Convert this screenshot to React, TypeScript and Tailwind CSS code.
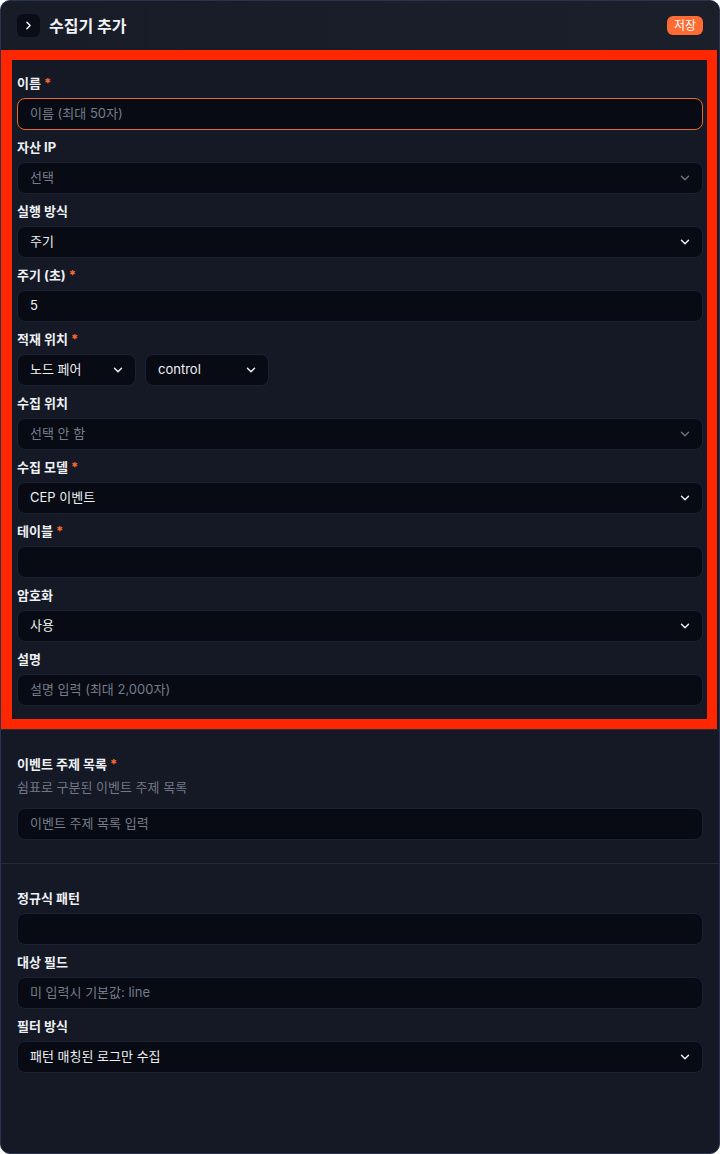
import React from 'react';
import { ChevronDown, ChevronRight } from 'lucide-react';

type Field = {
  label: string;
  required?: boolean;
  kind: 'input' | 'select';
  value?: string;
  placeholder?: string;
  focused?: boolean;
};

const mainFields: Field[] = [
  { label: '이름', required: true, kind: 'input', placeholder: '이름 (최대 50자)', focused: true },
  { label: '자산 IP', kind: 'select', placeholder: '선택' },
  { label: '실행 방식', kind: 'select', value: '주기' },
  { label: '주기 (초)', required: true, kind: 'input', value: '5' },
];

const restFields: Field[] = [
  { label: '수집 위치', kind: 'select', placeholder: '선택 안 함' },
  { label: '수집 모델', required: true, kind: 'select', value: 'CEP 이벤트' },
  { label: '테이블', required: true, kind: 'input' },
  { label: '암호화', kind: 'select', value: '사용' },
  { label: '설명', kind: 'input', placeholder: '설명 입력 (최대 2,000자)' },
];

const filterFields: Field[] = [
  { label: '정규식 패턴', kind: 'input' },
  { label: '대상 필드', kind: 'input', placeholder: '미 입력시 기본값: line' },
  { label: '필터 방식', kind: 'select', value: '패턴 매칭된 로그만 수집' },
];

const Label: React.FC<{ text: string; required?: boolean }> = ({ text, required }) => (
  <div className="mb-[7px] flex h-4 items-center text-[13px] font-bold leading-4 text-[#eef0f4]">
    {text}
    {required && <span className="ml-[3px] text-[#ff6a2b]">*</span>}
  </div>
);

const Box: React.FC<{ field: Field; className?: string }> = ({ field, className = 'w-full' }) => {
  const border = field.focused ? 'border-[#e8692e]' : 'border-[#1c2232]';
  const text = field.value ? 'text-[#eef0f4]' : 'text-[#767c8a]';
  return (
    <div
      className={`flex h-8 items-center justify-between rounded-lg border ${border} bg-[#080b13] pl-3 pr-[10px] text-[13px] ${text} ${className}`}
    >
      <span>{field.value ?? field.placeholder ?? ''}</span>
      {field.kind === 'select' && (
        <ChevronDown
          size={14}
          strokeWidth={2.5}
          className={field.value ? 'text-[#eef0f4]' : 'text-[#6b7180]'}
        />
      )}
    </div>
  );
};

const FieldRow: React.FC<{ field: Field }> = ({ field }) => (
  <div>
    <Label text={field.label} required={field.required} />
    <Box field={field} />
  </div>
);

export default function App() {
  return (
    <div
      className="relative h-[1154px] w-[720px] overflow-hidden rounded-[10px] border border-[#2c3350] bg-[#141925] text-[#eef0f4]"
      style={{ fontFamily: 'Inter, "Noto Sans CJK KR", sans-serif' }}
    >
      {/* header */}
      <div className="flex h-[49px] items-center justify-between bg-gradient-to-r from-[#171c27] to-[#1a1f2a] pl-4 pr-4">
        <div className="flex items-center gap-[9px]">
          <div className="flex h-[23px] w-[23px] items-center justify-center rounded-md bg-[#0a0d15]">
            <ChevronRight size={13} strokeWidth={2.5} className="text-white" />
          </div>
          <span className="text-[16px] font-bold text-[#f2f3f6]">수집기 추가</span>
        </div>
        <button className="flex h-[19px] items-center rounded-md bg-[#ff6b33] px-[7px] text-[12px] leading-none text-white">
          저장
        </button>
      </div>

      {/* basic section */}
      <div className="flex flex-col gap-[9px] border-b border-[#232a3c] px-4 pb-[23px] pt-[25px]">
        {mainFields.map((f) => (
          <FieldRow key={f.label} field={f} />
        ))}
        <div>
          <Label text="적재 위치" required />
          <div className="flex gap-[9px]">
            <Box field={{ label: '', kind: 'select', value: '노드 페어' }} className="w-[119px]" />
            <Box field={{ label: '', kind: 'select', value: 'control' }} className="w-[124px]" />
          </div>
        </div>
        {restFields.map((f) => (
          <FieldRow key={f.label} field={f} />
        ))}
      </div>

      {/* event topics */}
      <div className="border-b border-[#232a3c] px-4 pb-[23px] pt-[26px]">
        <Label text="이벤트 주제 목록" required />
        <div className="mb-[13px] text-[13px] leading-4 text-[#717786]">쉼표로 구분된 이벤트 주제 목록</div>
        <Box field={{ label: '', kind: 'input', placeholder: '이벤트 주제 목록 입력' }} />
      </div>

      {/* filter */}
      <div className="flex flex-col gap-[9px] px-4 pt-[26px]">
        {filterFields.map((f) => (
          <FieldRow key={f.label} field={f} />
        ))}
      </div>

      {/* annotation frame */}
      <div className="pointer-events-none absolute left-0 top-[49px] h-[679px] w-[716px] border-[10px] border-l-[11px] border-[#ff2600]" />
    </div>
  );
}
